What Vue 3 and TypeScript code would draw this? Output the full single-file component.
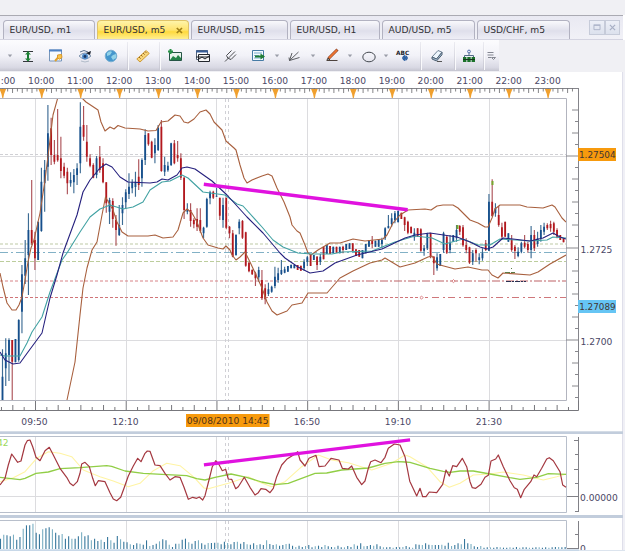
<script setup lang="ts">
interface Tab { label: string; width: number; active?: boolean }
interface Tool { icon: string; width: number }
interface Candle { x: number; high: number; low: number; top: number; bottom: number; up: boolean }

const tabs: Tab[] = [
  { label: 'EUR/USD, m1', width: 92 },
  { label: 'EUR/USD, m5', width: 92, active: true },
  { label: 'EUR/USD, m15', width: 97 },
  { label: 'EUR/USD, H1', width: 90 },
  { label: 'AUD/USD, m5', width: 93 },
  { label: 'USD/CHF, m5', width: 93 },
]

const tools: Tool[] = [
  { icon: 'caret', width: 12 }, { icon: 'fit', width: 24 }, { icon: 'note', width: 32 },
  { icon: 'eye', width: 26 }, { icon: 'globe', width: 26 }, { icon: 'sep', width: 6 },
  { icon: 'ruler', width: 26 }, { icon: 'sep', width: 7 }, { icon: 'picture', width: 24 },
  { icon: 'windows', width: 32 }, { icon: 'fork', width: 24 }, { icon: 'levels', width: 32 },
  { icon: 'caret', width: 4 }, { icon: 'fan', width: 32 }, { icon: 'caret', width: 4 },
  { icon: 'pencil', width: 34 }, { icon: 'caret', width: 2 }, { icon: 'ellipse', width: 35 },
  { icon: 'caret', width: 0 }, { icon: 'abc', width: 34 }, { icon: 'sep', width: 0 },
  { icon: 'eraser', width: 34 }, { icon: 'sep', width: 0 }, { icon: 'tree', width: 29 },
  { icon: 'sep', width: 0 }, { icon: 'more', width: 16 },
]

const hours = Array.from({ length: 15 }, (_, i) => ({
  x: 2.8 + i * 38.95,
  label: i === 0 ? ':00' : `${9 + i}:00`,
}))
const hourTicks = Array.from({ length: 119 }, (_, i) => 2.8 + i * 4.869).filter((x) => x < 577)
const timeTicks = Array.from({ length: 51 }, (_, i) => ({
  x: 35.5 + (i - 3) * 11.34,
  len: (i - 3) % 8 === 0 ? 9 : Math.abs(i - 3) % 2 === 0 ? 5 : 3,
})).filter((t) => t.x >= 0 && t.x < 577)
const priceTicks = Array.from({ length: 27 }, (_, i) => ({
  y: 110 + i * 11.5,
  len: (i - 4) % 8 === 0 ? 12 : i % 2 === 0 ? 6 : 3,
})).filter((t) => t.y < 400)
const gridX = [35.5, 126.5, 216.5, 307.5, 398.5, 489.5]
const timeLabels = [
  { x: 34.5, label: '09:50' }, { x: 125.5, label: '12:10' }, { x: 307, label: '16:50' },
  { x: 398, label: '19:10' }, { x: 488.8, label: '21:30' },
]

// Candles per price band: [origin y, "u|d high low [bodyTop bodyBottom]"], three units per pixel.
const candleBands: [number, string][] = [
  [245, 'u313 465 395 465,u280 423 325 370,u280 408 285 330,d285 465 285 350,u282 352,u223 350 225 345,u60 265 88 200,u-15 117 40 92'],
  [95, 'u355 600 405 480,d255 450 405 445,d410 525 435 490,u380 495 380 495,u218 410 260 408,u195 350 225 265,u30 257 115 215,d68 210 100 180,d135 208 180 200,d42 200 180 196,d125 250 190 228,d203 250 215 242,d218 298 230 265,u232 275 255 265,u222 295 240 262,u205 270 220 240,u22 235 95 205,d33 137 90 125,d90 200 140 185,d178 217 190 212,d205 250 210 248,u183 250 190 240,d153 233 185 225,d190 265 205 262,d262 353 262 325,u308 387 315 350,d310 398 318 372,d360 452 375 405,u330 423 390 420,u307 390 330 355,u283 340 292 322,u235 312 275 297,u253 295 262 280,u230 305 260 276,d193 285 245 270,u190 275 195 250,u103 210 120 195,d115 152 115 148,d137 190 140 188,u130 205 150 175,u90 168 98 165,d75 230 95 228,u185 243 210 230,u200 230 212 226,u143 213 145 210,d135 208 145 205,d138 200 180 190,d175 255 190 248,d245 372 248 345,u325 358 342 350,d325 395 345 378,d370 400 375 388,d340 408 372 395,d340 413 375 408,u395 430 398 415,u308 398 312 395,u287 328 292 310,d287 312 290 308,u278 305 302 305,d308 375 308 362,u308 398 330 375,d308 403 308 398,d393 430 395 415,d405 487 415 485,u418 482 420 480,u373 418 380 400,d375 432 378 428,d410 515 412 512'],
  [240, 'd65 97 68 94,d88 105 90 103,d95 138 100 115,u80 125 90 112,d90 180 120 175,d133 193 145 178,u128 168 148 162,u137 158 140 155,u80 145 110 138,u83 128 100 120,u60 105 90 102,u80 100 88 98'],
  [180, 'u258 275,u254 265,u255 265,d255 270,d257 272,u238 272 245 265,u228 258 232 245,d222 258,u225 240,d228 270 230 255,u222 255 230 245,d200 238,u195 222,d198 222,u200 220,d200 218,u200 220,d197 220 200 210,u192 210,u190 207,d190 213,d208 228,d210 230,u210 235,u192 220,u180 200,d168 205 182 192,u182 200,u178 200,u173 205 180 192,u142 180 145 175,u105 145 138 145,u100 140 115 132,u93 130 100 120,u92 127,d98 117,d110 153 112 135,d122 163 125 158,d140 160,u145 182 158 172,d145 170,d145 215 148 212,u195 227 205 212,u158 210 162 205,d158 235 160 232,d228 285 230 250,u220 272 232 265,u222 258'],
  [170, 'u185 248 190 240,d195 252 200 248,u195 250 220 240,u195 215,u165 215 180 205,d165 195 168 185,d165 230 172 226,d205 250 225 240,d230 282 232 278,u240 285 250 275,d235 275 240 250,u250 283 262 270,u235 272 250 265,d210 243 220 240,u72 243 95 242,d28 140 95 138,u100 140 115 130,d108 170 135 165,d158 208 172 200,d155 200,u190 215,d195 245 210 240,d225 267 230 243,u232 262 245 258,u215 250 220 245,d195 235 218 230,d215 248 222 240,u168 265 195 240,d180 243 195 235,u185 230 205 222,u165 215 180 205,u158 195 170 185,d160 180 165 175,d152 185 162 175,d155 195 160 185,d175 205 180 200,d195 210,d205 217'],
]
const candles: Candle[] = candleBands
  .flatMap(([oy, src]) => src.split(',').map((item) => {
    const v = item.slice(1).split(' ').map((n) => oy + Number(n) / 3)
    return { x: 0, high: v[0], low: v[1], top: v[2] ?? v[0], bottom: v[3] ?? v[1], up: item[0] === 'u' }
  }))
  .map((c, i) => ({ ...c, x: 2.5 + i * 3.243 }))
candles.forEach((c) => { c.low = Math.min(c.low, 400) })

// Oscillator series in segments of [origin x, points], three units per pixel.
const join = (segments: [number, string][]): string =>
  segments.flatMap(([ox, src]) => src.split(' ').map((p) => {
    const [x, y] = p.split(',').map(Number)
    return `${(ox + x / 3).toFixed(1)},${(400 + y / 3).toFixed(1)}`
  })).join(' ')

const oscFast = join([
  [0, '0,255 15,235 25,195 35,162 53,187 63,183 75,135 82,122 90,120 98,140 108,172 120,182 135,152 148,142 160,165 180,205 200,232 210,250 220,257 232,245 240,220 245,192 255,187 268,200 278,235 286,257 295,242 315,245 330,278 340,297 350,302 362,292 372,265 385,228 400,198 413,175 423,185 435,160 442,153 450,154 465,195 480,197 495,220 510,240 525,230 540,232 552,262 565,298 578,292 590,295 598,291 608,300 615,287'],
  [205, '12,240 22,200 32,182 40,190 52,212 62,208 70,237 80,238 92,266 100,260 118,232 135,262 150,285 160,278 168,266 182,268 195,278 205,265 215,230 230,195 245,178 270,162 278,155 285,180 300,198 312,175 333,166 342,200 360,198 378,175 402,180 412,205 430,207 440,198 455,232 470,254 480,243 490,205 497,185 510,180 528,188 540,172 550,145 568,132 585,135 600,170 614,243'],
  [410, '0,245 20,288 30,265 38,290 48,290 58,276 80,278 98,253 108,210 118,228 128,197 140,200 157,175 170,200 180,245 187,263 197,265 213,253 225,232 235,226 243,183 257,177 265,165 280,200 300,242 313,263 322,268 332,293 343,268 362,245 372,225 380,230 395,205 410,177 418,173 430,182 450,215 458,255 468,262'],
])
const oscSlow = join([
  [0, '0,232 60,239 75,235 108,220 145,216 180,206 240,203 320,197 335,199 375,213 430,220 500,224 560,227 590,236 615,240'],
  [205, '30,232 78,222 125,232 170,246 210,254 250,250 330,220 365,219 410,210 490,204 540,190 580,185 600,186'],
  [410, '0,187 60,205 100,214 120,217 150,213 190,213 240,222 300,233 330,238 380,232 415,221 468,223'],
])
const oscMid = join([
  [0, '0,245 40,233 75,215 110,175 145,155 180,160 215,170 250,210 300,230 340,243 385,260 420,250 460,212 500,190 540,197 580,230 612,264'],
  [205, '10,266 70,250 130,230 160,245 200,260 240,245 290,200 340,165 380,180 430,188 500,210 560,190 600,165'],
  [410, '0,170 50,200 90,245 118,262 150,250 190,225 240,222 280,216 340,225 400,240 440,230 468,222'],
])

const volume = [
  31, 43, 41, 38, 43, 28, 36, 61, 71, 71, 76, 49, 44, 59, 62, 65, 59, 49, 41, 45, 31, 38, 31, 31, 38, 50, 38, 41, 26, 31,
  24, 28, 21, 36, 26, 19, 39, 29, 22, 20, 14, 12, 17, 16, 13, 26, 9, 12, 16, 23, 29, 26, 13, 6, 16, 16, 28, 31, 20, 16,
  24, 26, 17, 13, 18, 18, 19, 19, 14, 22, 18, 14, 21, 22, 16, 21, 14, 13, 17, 12, 14, 12, 26, 15, 12, 14, 10, 12, 15, 16,
  10, 6, 10, 6, 9, 12, 5, 8, 10, 6, 12, 8, 6, 5, 10, 5, 5, 9, 6, 14, 10, 17, 8, 9, 12, 10, 14, 8,
  5, 5, 6, 4, 6, 5, 6, 9, 5, 4, 14, 13, 12, 17, 13, 12, 12, 12, 13, 10, 19, 9, 12, 17, 14, 30, 17, 15, 8, 6, 9,
  4, 5, 5, 4, 6, 5, 4, 4, 5, 4, 6, 4, 5, 5, 4, 4, 5, 5, 4, 5, 4, 5, 6, 6, 5, 6,
].map((h, i) => ({ x: 0.5 + i * 3.245, h: h / 3 })).filter((b) => b.x < 566)
</script>

<template>
  <main class="terminal">
    <div class="title-strip"></div>
    <header class="tab-bar">
      <nav class="tabs">
        <button
          v-for="tab in tabs"
          :key="tab.label"
          class="tab"
          :class="{ active: tab.active }"
          :style="{ width: tab.width + 'px' }"
        >
          <span>{{ tab.label }}</span>
          <svg v-if="tab.active" class="close" width="7" height="7" viewBox="0 0 7 7"><path d="M.8 1 6 6M6 1 .8 6" stroke="#a18119" stroke-width="1.7" /></svg>
        </button>
      </nav>
      <div class="window-buttons">
        <svg width="16" height="15" viewBox="0 0 16 15"><path d="M4.5 5h7v5h-7zM4 4.5h8" fill="none" stroke="#a7afc5" /></svg>
        <svg width="15" height="15" viewBox="0 0 15 15"><path d="m4.5 4.5 6 6m0-6-6 6" stroke="#a7afc5" stroke-width="1.4" /></svg>
      </div>
    </header>

    <div class="tool-row">
      <div class="toolbar">
        <div v-for="(tool, i) in tools" :key="i" class="tool" :style="{ width: tool.width + 'px' }">
          <svg v-if="tool.icon === 'caret'" width="6" height="6" viewBox="0 0 6 6"><path d="M.8 1.5h4.4L3 4.2z" fill="#9a9da8" /></svg>
          <i v-else-if="tool.icon === 'sep'" class="sep"></i>
          <svg v-else width="16" height="16" viewBox="0 0 16 16" fill="none">
            <g v-if="tool.icon === 'fit'">
              <path d="M3 3.5h10M3 13.5h10" stroke="#33363b" /><path d="M8 3.5v9" stroke="#187832" stroke-width="2" /><path d="m5 6.5 3-3 3 3zm0 4 3 3 3-3z" fill="#218638" />
            </g>
            <g v-else-if="tool.icon === 'note'">
              <path d="M1.5 2h12v11h-12z" fill="#f6faff" stroke="#7695ba" /><path d="M1 2.5h13" stroke="#4d81c5" stroke-width="2" /><path d="m7 13 4-4.5" stroke="#e0a02c" stroke-width="2" /><path d="m9.5 7 4-.5.5 3-2.5 1.7-2-1.2z" fill="#f8c44c" stroke="#dc9827" />
            </g>
            <g v-else-if="tool.icon === 'eye'">
              <path d="M2 8q6-6 12 0-6 6-12 0" fill="#dfecf7" stroke="#8195ae" /><circle cx="8" cy="8.5" r="3" fill="#548ecb" /><circle cx="8" cy="8.5" r="1.4" fill="#193966" /><path d="M3 4q4-3 8 0" stroke="#5c718e" /><path d="m9 5 5-2-1 4z" fill="#161d29" /><path d="M4 13q4 2 8 0" stroke="#b1bbc9" />
            </g>
            <g v-else-if="tool.icon === 'globe'">
              <circle cx="8" cy="8" r="5.8" fill="#4496cd" stroke="#7aafd1" /><path d="M4 5q3-3 5-1l-2 3-3 1zm6 2 3-1v4l-3 2-2-3z" fill="#92d2e8" />
            </g>
            <g v-else-if="tool.icon === 'ruler'">
              <path d="m1.8 11 9.4-8.5 3 3L5 14z" fill="#f7d57a" stroke="#cf9a35" /><path d="m4 9 1.6 1.6M6 7l1.5 1.5M8 5l1.6 1.6M10 3.5l1.4 1.4" stroke="#94641c" />
            </g>
            <g v-else-if="tool.icon === 'picture'">
              <path d="M2.5 4.5h12v8h-12z" fill="#e9f5ec" stroke="#245545" /><path d="m3 12 3-4 3 2 2-3 3 3v2z" fill="#238447" /><path d="M1 3.5h5M3.5 1v5" stroke="#279246" stroke-width="2" />
            </g>
            <g v-else-if="tool.icon === 'windows'">
              <path d="M1.5 2.5h11v9h-11z" fill="#fff" stroke="#546579" /><path d="M1 3.5h12" stroke="#375d97" stroke-width="2" /><path d="M3.5 6.5h11v7h-11z" fill="#f6f6f6" stroke="#22262d" /><path d="m4 11 3-2 3 2 4-3M1 9h14" stroke="#22262d" />
            </g>
            <path v-else-if="tool.icon === 'fork'" d="m2 13.5 5-5M3.5 7.5Q4 11 8 11.5M3.5 7.5l5-5M7 8.5l5-5M8 11.5l5-5" stroke="#4b4d51" />
            <g v-else-if="tool.icon === 'levels'">
              <path d="M1.5 2.5h11v10h-11z" fill="#f5fbff" stroke="#467ba5" /><path d="M3 5h8M3 7.5h5M3 10h8" stroke="#7aabcd" /><path d="M4 8.5h9" stroke="#217c37" stroke-width="2" /><path d="m9.5 5.5 4.5 3-4.5 3z" fill="#217c37" />
            </g>
            <path v-else-if="tool.icon === 'fan'" d="M2.5 12.5 5 5M2.5 12.5 11.5 4M2.5 12.5l10-3M2.5 12.5l-.5-3" stroke="#5b5d61" />
            <g v-else-if="tool.icon === 'pencil'">
              <path d="m4.5 10.5 9-9" stroke="#8b4930" stroke-width="3" /><path d="m5 10 8-8" stroke="#ed7432" stroke-width="1.8" /><path d="M2.5 12.5h11M3 12l1-2 2 2z" stroke="#4d423d" />
            </g>
            <ellipse v-else-if="tool.icon === 'ellipse'" cx="8" cy="9" rx="6.2" ry="4.8" stroke="#444950" />
            <g v-else-if="tool.icon === 'abc'">
              <text x="1" y="6.5" fill="#22252b" class="abc">ABC</text><path d="M9.8 7v6M7 10h6M8 8l4 4M12 8l-4 4" stroke="#2d61a2" stroke-width="1.3" />
            </g>
            <g v-else-if="tool.icon === 'eraser'">
              <path d="m3 9 6-6.5 4 1.7L7.5 11z" fill="#edf6fd" stroke="#6f8295" /><path d="m3 9 4.5 2L13 4.3v2.5L7.5 13 3 11z" fill="#a2b9ce" stroke="#4e6173" /><path d="M8 13.5h5" stroke="#555" />
            </g>
            <g v-else-if="tool.icon === 'tree'">
              <circle cx="8" cy="3.5" r="1.4" stroke="#536eac" /><path d="M8 5v3M3.5 9V7.5h9V9" stroke="#526b86" /><path d="M2 9h3.4v5H2zm4.3 0h3.4v5H6.3zm4.3 0H14v5h-3.4z" fill="#1c722b" /><path d="M2 11.5h12" stroke="#15361c" />
            </g>
            <path v-else d="M4.5 4.5h6M4.5 7h6M5 9.5h3M8.5 9.5h4L10.5 11.5z" stroke="#777b86" stroke-width=".9" />
          </svg>
        </div>
      </div>
    </div>

    <svg class="chart" width="625" height="479" viewBox="0 72 625 479">
      <defs>
        <clipPath id="plot"><rect x="0" y="98.5" width="566" height="302" /></clipPath>
      </defs>
      <rect x="623" y="72" width="2" height="479" fill="#f0f0f6" />
      <path d="M622.5 72v479" stroke="#dfdfea" />

      <g class="label" text-anchor="middle">
        <text v-for="(h, i) in hours" :key="h.x" :x="i === 0 ? 8 : h.x - 0.5" y="84.2">{{ h.label }}</text>
      </g>
      <path d="M0 88.5h578" stroke="#85858b" />
      <path v-for="(x, i) in hourTicks" :key="'h' + i" :d="`M${x} 88v${i % 2 ? 3.5 : 5}`" stroke="#77777b" stroke-width=".9" />
      <path v-for="h in hours" :key="'t' + h.x" :d="`M${h.x - 3.3} 89h6.6l-2 5-.8 4h-1l-.8-4z`" fill="#f0a02e" />

      <g stroke="#dcdcdf" stroke-width="1">
        <path v-for="x in gridX" :key="x" :d="`M${x} 99v301M${x} 437v75M${x} 521v27`" />
        <path d="M0 156.5h566M0 248.5h566M0 340.5h566M0 496.5h566" />
      </g>
      <path d="M0 154.5h566" stroke="#d0d0d4" stroke-dasharray="3 2" />
      <path d="M225.5 99v301M228.5 99v301M225.5 437v75M228.5 437v75M225.5 521v27M228.5 521v27" stroke="#d0d0d5" stroke-dasharray="3 3" />
      <path d="M0 244H566" stroke="#bdc9a5" stroke-dasharray="3 2" />
      <path d="M0 252.5H566" stroke="#82b1c6" stroke-dasharray="8 3 2 3" />
      <path d="M0 261.5H566" stroke="#bccd9c" stroke-dasharray="4 2" />
      <path d="M0 281H310" stroke="#d78286" stroke-dasharray="3 2" /><path d="M310 281H566" stroke="#bd6065" stroke-dasharray="8 2 2 2" />
      <path d="M0 297.5H430" stroke="#d07478" stroke-dasharray="3 2" /><path d="M432 297.5H566" stroke="#cf777b" stroke-dasharray="7 4 2 3" />
      <g fill="#fff" stroke="#db8588"><path d="m421.5 296 1.6 1.6-1.6 1.6-1.6-1.6zM453.5 279.5l1.6 1.6-1.6 1.6-1.6-1.6z" /><path d="m421.5 260 1.4 1.4-1.4 1.4-1.4-1.4z" stroke="#bdd195" /></g>
      <path d="M506 281.5h20" stroke="#293052" stroke-dasharray="5 1 2 1" />

      <g clip-path="url(#plot)">
        <g v-for="(c, i) in candles" :key="'c' + i">
          <path :d="`M${c.x} ${c.high}V${c.low}`" :stroke="c.up ? '#3d6c94' : '#ad5359'" stroke-width="1.15" />
          <path :d="`M${c.x} ${c.top}V${c.bottom}`" :stroke="c.up ? '#164f8c' : '#b3181e'" stroke-width="1.8" />
        </g>
        <g fill="none" stroke-width="1.1" stroke-linejoin="round">
          <polyline stroke="#a8603e" points="0,273 3,287 7,303 12,310 16,310 19,305 22,297 25,280 28,262 31,248 34,240 40,213 45,180 50,140 53,115 58,97" />
          <polyline stroke="#a8603e" points="82,98 86,102 92,106 98,110 101,122 105,131 110,127 114,129 118,125.5 125,128 140,129 148,131 156,130.5 161,122 168,121 175,115 180,116 184,122 188,123 194,119 200,112 206,110 210,114 214,122 222,130 226,141 234,148 236,150 240,165 244,178 247,183 252,180 262,176 268,174 272,176 277,188 284,202 290,217 292,225 297,231 300,233 305,245 308,253 311,255 318,250 330,243 340,243 353,239 365,241 383,239 387,235 393,223 400,215 408,210 425,209 431,210 437,206 443,205 453,205 458,208 465,215 470,220 478,223 485,227 488,227 492,218 495,209 500,205 520,205 527,207 543,208 552,205 555,207 562,218 566,222" />
          <polyline stroke="#a8603e" points="67,400 75,362 80,315 83,288 87,268 92,250 97,242 102,215 105.5,197 109,203 113,210 117,222 122,232 128,236 148,236 155,235 163,238 173,237 178,230 183,213 187,209 192,213 197,222 203,238 208,245 218,248 223,249 226,246 230,250 232,255 236,260 240,257 245,252 250,262 257,277 262,288 267,302 272,311 277,315 287,311 292,305 302,303 308,293 327,293 340,278 353,271 370,263 382,260 385,258 400,267 415,263 428,257 432,256 437,264 440,265 455,269 468,267 482,270 488,270 492,275 498,278 503,273 530,275 538,272 550,264 566,255" />
          <polyline stroke="#42a2a3" points="0,355 5,356 20,356 27,343 32,332 42,317 50,292 62,260 67,253 80,232 90,217 100,209 110,205 123,209 133,207 143,202 150,190 162,182 170,181 182,175 188,178 203,192 225,195 237,204 243,206 262,227 273,240 283,247 298,253 312,254 332,254 342,252 372,251 395,242 415,236 432,238 445,244 452,242 463,239 478,245 490,245 500,239 530,241 547,240 553,237 566,238" />
          <polyline stroke="#26217e" points="0,352 5,360 13,364 20,363 28,352 42,333 50,298 57,275 63,253 77,215 83,192 90,180 100,168 106,164 112,167 120,177 128,182 150,183 157,182 162,179 168,180 177,175 182,168 187,167 195,169 212,181 227,195 247,217 263,233 280,253 285,258 298,267 310,273 323,271 335,263 357,255 382,249 405,238 415,235 430,233 457,237 470,242 480,247 487,249 493,247 503,238 513,239 530,241 543,238 553,233 560,237 566,239" />
        </g>
        <path d="M457.5 225v4M492.5 181v4" stroke="#78a72e" stroke-width="2" />
        <path d="M511 268.5h1M505 272.5h10" stroke="#5c7c45" stroke-dasharray="5 1" />
      </g>
      <path d="m205.5 184.5 200.5 25" stroke="#e012df" stroke-width="3.4" stroke-linecap="square" />
      <path d="M0 98.5h566.5v302H0" fill="none" stroke="#b2b4be" />

      <path d="M578.5 88v314" stroke="#85858b" />
      <path v-for="t in priceTicks" :key="t.y" :d="`M${578 - t.len} ${t.y}h${t.len}`" stroke="#88888d" />
      <path d="M0 410.5h578.5v-10" fill="none" stroke="#77777c" />
      <path v-for="t in timeTicks" :key="'b' + t.x" :d="`M${t.x} ${410 - t.len}v${t.len}`" stroke="#77777c" />

      <rect x="578" y="148" width="38" height="13" fill="#f79a0d" />
      <rect x="578" y="300" width="38" height="13" fill="#66c5f4" />
      <g class="label">
        <text x="579" y="158.2" class="dark" textLength="36.5" lengthAdjust="spacingAndGlyphs">1.27504</text>
        <text x="580.5" y="252.5">1.2725</text>
        <text x="580.5" y="345">1.2700</text>
        <text x="579.2" y="310.2" class="dark" textLength="36.5" lengthAdjust="spacingAndGlyphs">1.27089</text>
        <text x="580" y="501.3">0.00000</text>
        <text x="580" y="552">0</text>
      </g>
      <rect x="186" y="414" width="83.5" height="13" fill="#f79a0d" />
      <text class="label dark" x="186.7" y="424.3">09/08/2010 14:45</text>
      <g class="label" text-anchor="middle">
        <text v-for="t in timeLabels" :key="t.label" :x="t.x" y="424.7">{{ t.label }}</text>
      </g>

      <rect x="0" y="431.3" width="623" height="2.7" fill="#c2cddc" />
      <path d="M0 436.5h566.5v76H0" fill="none" stroke="#b8bfcb" />
      <g fill="none" stroke-width="1.1" stroke-linejoin="round">
        <polyline :points="oscMid" stroke="#fff4a4" />
        <polyline :points="oscSlow" stroke="#91ce46" stroke-width="1.3" />
        <polyline :points="oscFast" stroke="#a43840" stroke-width="1.2" />
      </g>
      <text class="label lime" x="-3" y="445.5">42</text>
      <path d="m205.5 464.7 203-24.7" stroke="#e012df" stroke-width="3.2" stroke-linecap="square" />
      <path d="M578.5 437v75M574 440.5h4M575 454.5h3M574 469.5h4M575 483.5h3M567 496.5h11M575 511.5h3" stroke="#818187" />

      <rect x="0" y="515" width="623" height="3" fill="#c2cddc" />
      <path d="M0 520.5h566.5v28" fill="none" stroke="#b8bfcb" />
      <path v-for="(b, i) in volume" :key="'v' + i" :d="`M${b.x} 549v${-b.h}`" :stroke="i % 3 === 1 ? '#7bafc3' : '#37779c'" stroke-width="1.1" />
      <path d="M578.5 521v28M575 534.5h3M567 548.5h11" stroke="#818187" />
      <rect x="0" y="549.3" width="579" height="1.7" fill="#c8d8e8" />
      <rect x="579" y="550" width="46" height="1" fill="#dce4ee" />
    </svg>
  </main>
</template>

<style>
body { margin: 0; overflow: hidden; background: #fff; }
</style>

<style scoped>
.terminal { width: 625px; height: 551px; overflow: hidden; display: flex; flex-direction: column; font-family: "DejaVu Sans", Verdana, sans-serif; }
.title-strip { flex: none; height: 15px; background: #f0f0f4; }
.tab-bar { box-sizing: border-box; flex: none; height: 25px; width: 623px; display: flex; align-items: flex-end; justify-content: space-between; border-top: 1px solid #aaaab2; border-bottom: 1px solid #d4d4e1; background: linear-gradient(#e9e9f2, #f1f1f7); }
.tabs { display: flex; gap: 2px; padding-left: 3px; }
.tab { box-sizing: border-box; height: 19px; flex: none; display: flex; align-items: center; justify-content: space-between; margin: 0; padding: 0 5.5px; border: 1px solid #b2b2c1; border-bottom: 0; border-radius: 4px 4px 0 0; background: linear-gradient(#f9f9fc, #dfdfeb 55%, #eeeef6); color: #303034; font: 9.15px "DejaVu Sans", Verdana, sans-serif; white-space: nowrap; }
.tab.active { border-color: #dfc368; background: linear-gradient(#fff4a9, #ffe36e 50%, #ffd93d 60%, #ffef91); }
.close { flex: none; }
.window-buttons { display: flex; align-self: flex-start; padding: 4px 3px 0 0; }
.window-buttons svg { box-sizing: border-box; border: 1px solid #c6cbd9; background: linear-gradient(#eceff7, #dce1ed); }
.tool-row { flex: none; height: 32px; padding-top: 0; background: #f0f0f4; }
.toolbar { box-sizing: border-box; display: flex; width: 499px; height: 31px; padding: 1px 0 0 4px; background: linear-gradient(#fcfcfe, #f2f2f8 50%, #d9d9e4 88%, #c5c5d0); }
.tool { flex: none; display: flex; align-items: center; justify-content: center; }
.tool svg { flex: none; }
.sep { flex: none; width: 1px; height: 28px; background: linear-gradient(#ececf2, #c7c7d2); box-shadow: 1px 0 #fafafc; }
.chart { flex: none; display: block; background: #fff; }
.label { font: 9.15px "DejaVu Sans", Verdana, sans-serif; fill: #4b4766; }
.dark { fill: #423532; }
.label.dark { fill: #50321a; }
.lime { fill: #9bd85a; }
.abc { font: bold 5.8px "DejaVu Sans", sans-serif; }
</style>
